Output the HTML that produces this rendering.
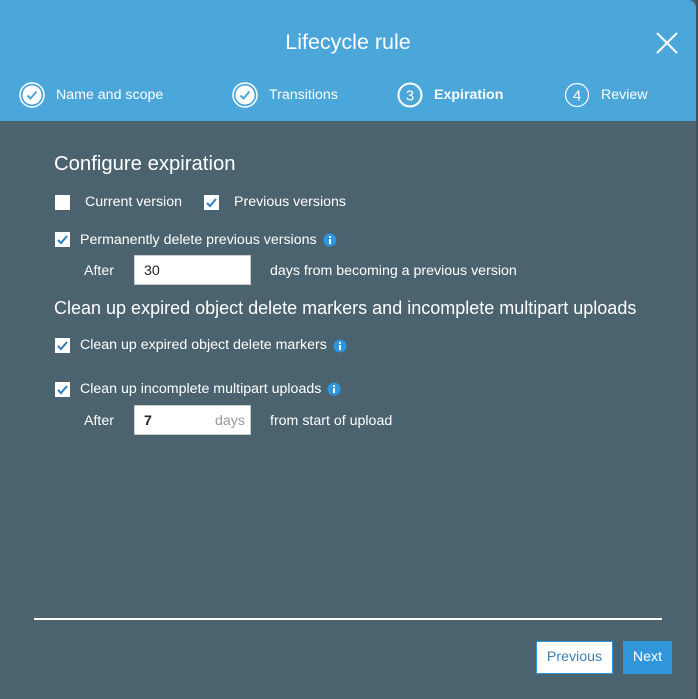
<!DOCTYPE html>
<html><head><style>
body{margin:0;width:698px;height:699px;background:#4b626f;font-family:"Liberation Sans",sans-serif;position:relative;overflow:hidden}
.hdr{position:absolute;left:0;top:0;width:696px;height:121px;background:#4ba6da;border-top-right-radius:8px}
.edge{position:absolute;left:696px;top:0;width:2px;height:699px;background:#3e525d}
.t{position:absolute;color:#fff;white-space:nowrap}
.ab{position:absolute}
.cb{position:absolute;width:15px;height:15px;background:#fff}
.inp{position:absolute;background:#fff;height:30px;border:1px solid #ccc;box-sizing:border-box}
.f{font-size:14.2px}
</style></head><body>
<div class="hdr"></div>
<div class="edge"></div>
<div class="t" style="left:0;width:696px;text-align:center;top:30px;font-size:21.5px">Lifecycle rule</div>
<svg class="ab" style="left:655px;top:31px" width="24" height="24"><path d="M2 2L22 22M22 2L2 22" stroke="#fff" stroke-width="2"/></svg>
<svg class="ab" style="left:19px;top:82px" width="26" height="26"><circle cx="13" cy="13" r="12" fill="none" stroke="#fff" stroke-width="1.5"/><circle cx="13" cy="13" r="9.5" fill="#fff"/><path d="M8.5 13.5l3 3 6-7" fill="none" stroke="#4ba6da" stroke-width="2"/></svg>
<div class="t f" style="left:56px;top:87px">Name and scope</div>
<svg class="ab" style="left:232px;top:82px" width="26" height="26"><circle cx="13" cy="13" r="12" fill="none" stroke="#fff" stroke-width="1.5"/><circle cx="13" cy="13" r="9.5" fill="#fff"/><path d="M8.5 13.5l3 3 6-7" fill="none" stroke="#4ba6da" stroke-width="2"/></svg>
<div class="t f" style="left:269px;top:87px">Transitions</div>
<svg class="ab" style="left:397px;top:82px" width="26" height="26"><circle cx="13" cy="13" r="11.5" fill="none" stroke="#fff" stroke-width="2"/><text x="13" y="18.5" text-anchor="middle" fill="#fff" font-size="15" font-family="Liberation Sans">3</text></svg>
<div class="t f" style="left:434px;top:87px;font-weight:bold">Expiration</div>
<svg class="ab" style="left:564px;top:82px" width="26" height="26"><circle cx="13" cy="13" r="11.5" fill="none" stroke="#fff" stroke-width="1.2"/><text x="13" y="18.5" text-anchor="middle" fill="#fff" font-size="15" font-family="Liberation Sans">4</text></svg>
<div class="t f" style="left:601px;top:87px">Review</div>

<div class="t" style="left:54px;top:153px;font-size:20.3px">Configure expiration</div>
<div class="cb" style="left:55px;top:195px"></div>
<div class="t f" style="left:85px;top:194px">Current version</div>
<svg class="cb" style="left:204px;top:195px" width="15" height="15"><path d="M3 8l3 3 6-7" fill="none" stroke="#2d7fc0" stroke-width="2"/></svg>
<div class="t f" style="left:234px;top:194px">Previous versions</div>
<svg class="cb" style="left:55px;top:232px" width="15" height="15"><path d="M3 8l3 3 6-7" fill="none" stroke="#2d7fc0" stroke-width="2"/></svg>
<div class="t f" style="left:80px;top:232px">Permanently delete previous versions</div>
<svg class="ab" style="left:323px;top:233px" width="14" height="14"><circle cx="7" cy="7" r="6.5" fill="#2d96e0"/><rect x="6" y="6" width="2" height="5" fill="#fff"/><rect x="6" y="3" width="2" height="2" fill="#fff"/></svg>
<div class="t f" style="left:84px;top:263px">After</div>
<div class="inp" style="left:134px;top:255px;width:117px"></div>
<div class="ab f" style="left:144px;top:263px;color:#222">30</div>
<div class="t f" style="left:270px;top:263px">days from becoming a previous version</div>
<div class="t" style="left:54px;top:298px;font-size:18px">Clean up expired object delete markers and incomplete multipart uploads</div>
<svg class="cb" style="left:55px;top:338px" width="15" height="15"><path d="M3 8l3 3 6-7" fill="none" stroke="#2d7fc0" stroke-width="2"/></svg>
<div class="t f" style="left:80px;top:337px">Clean up expired object delete markers</div>
<svg class="ab" style="left:333px;top:339px" width="14" height="14"><circle cx="7" cy="7" r="6.5" fill="#2d96e0"/><rect x="6" y="6" width="2" height="5" fill="#fff"/><rect x="6" y="3" width="2" height="2" fill="#fff"/></svg>
<svg class="cb" style="left:55px;top:382px" width="15" height="15"><path d="M3 8l3 3 6-7" fill="none" stroke="#2d7fc0" stroke-width="2"/></svg>
<div class="t f" style="left:80px;top:381px">Clean up incomplete multipart uploads</div>
<svg class="ab" style="left:327px;top:382px" width="14" height="14"><circle cx="7" cy="7" r="6.5" fill="#2d96e0"/><rect x="6" y="6" width="2" height="5" fill="#fff"/><rect x="6" y="3" width="2" height="2" fill="#fff"/></svg>
<div class="t f" style="left:84px;top:413px">After</div>
<div class="inp" style="left:134px;top:405px;width:117px"></div>
<div class="ab f" style="left:144px;top:413px;color:#222;font-weight:bold">7</div>
<div class="ab f" style="left:215px;top:413px;color:#999">days</div>
<div class="t f" style="left:270px;top:413px">from start of upload</div>

<div class="ab" style="left:34px;top:618px;width:628px;height:2px;background:#fff"></div>
<div class="ab f" style="left:536px;top:641px;width:77px;height:33px;background:#fff;border:1px solid #2d96e0;box-sizing:border-box;color:#3c7fb1;text-align:center;line-height:31px">Previous</div>
<div class="ab f" style="left:623px;top:641px;width:49px;height:33px;background:#3197db;color:#fff;text-align:center;line-height:33px">Next</div>
</body></html>
